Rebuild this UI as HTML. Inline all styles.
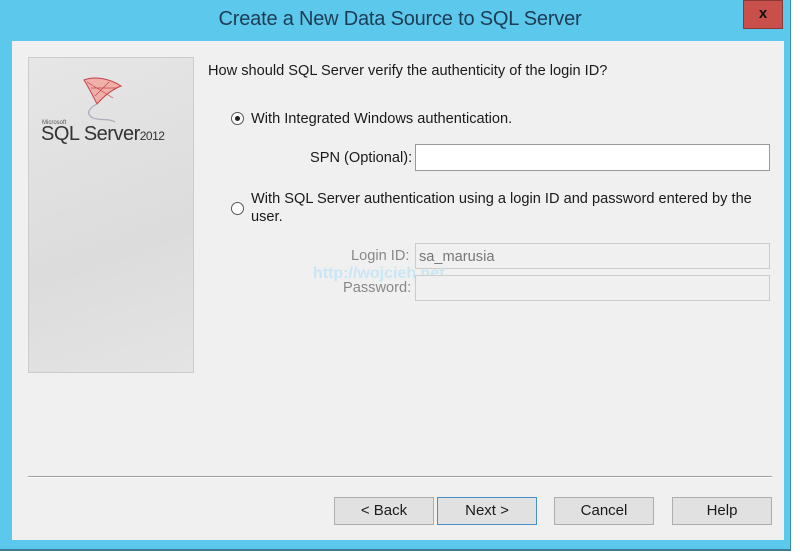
<!DOCTYPE html>
<html><head><style>
body{margin:0;width:800px;height:553px;background:#fff;position:relative;overflow:hidden;font-family:"Liberation Sans",sans-serif;font-size:14.6px;color:#1a1a1a}
.frame{position:absolute;left:0;top:0;width:790px;height:549px;background:#5cc8eb;border-right:1px solid #3a8fb0;border-bottom:2px solid #3a7d95}
.title{position:absolute;left:0;width:800px;top:8px;text-align:center;font-size:20px;color:#1d3c55;letter-spacing:-0.2px}
.close{position:absolute;left:743px;top:0;width:40px;height:29px;background:#c9504a;border:1px solid #8a3a36;box-sizing:border-box;color:#111;font-weight:bold;text-align:center;line-height:26px;font-size:15px}
.client{position:absolute;left:12px;top:41px;width:772px;height:499px;background:#f0f0f0}
.logo{position:absolute;left:28px;top:57px;width:164px;height:314px;border:1px solid #ccc;background:linear-gradient(160deg,#e6e6e6,#dcdcdc 60%,#e4e4e4)}
.t{position:absolute;white-space:nowrap}
.inp{position:absolute;background:#fff;border:1px solid #999;box-sizing:border-box}
.dis{background:#f0f0f0;border-color:#ccc}
.radio{position:absolute;width:13px;height:13px;border:1px solid #555;border-radius:50%;background:#fff;box-sizing:border-box}
.btn{position:absolute;top:497px;width:100px;height:28px;border:1px solid #adadad;background:#e1e1e1;box-sizing:border-box;text-align:center;line-height:26px;font-size:15px}
</style></head><body>
<div class="frame"></div>
<div class="title">Create a New Data Source to SQL Server</div>
<div class="close">x</div>
<div class="client"></div>
<div class="logo">
<svg width="164" height="100" style="position:absolute;left:0;top:0">
<path d="M55 22 C65 18 80 20 92 28 C82 32 75 38 68 46 C64 38 60 30 55 22Z" fill="#eeb0a8" stroke="#c8404a" stroke-width="1"/>
<path d="M58 24 L84 40 M62 30 L88 30 M66 38 L80 24" stroke="#c8404a" stroke-width="0.7"/>
<path d="M68 46 C60 50 56 56 64 60 C72 63 80 60 86 64" stroke="#aab" fill="none" stroke-width="1.2"/>
</svg>
<div class="t" style="left:13px;top:62px;font-size:6px;color:#555">Microsoft</div>
<div class="t" style="left:12px;top:65px;font-size:20px;color:#333;letter-spacing:-0.5px">SQL Server<span style="font-size:12px">2012</span></div>
</div>
<div class="t" style="left:208px;top:63px">How should SQL Server verify the authenticity of the login ID?</div>
<div class="radio" style="left:231px;top:112px"><div style="position:absolute;left:3px;top:3px;width:5px;height:5px;border-radius:50%;background:#222"></div></div>
<div class="t" style="left:251px;top:111px">With Integrated Windows authentication.</div>
<div class="t" style="left:310px;top:150px">SPN (Optional):</div>
<div class="inp" style="left:415px;top:144px;width:355px;height:27px"></div>
<div class="radio" style="left:231px;top:202px"></div>
<div class="t" style="left:251px;top:191px">With SQL Server authentication using a login ID and password entered by the</div>
<div class="t" style="left:251px;top:209px">user.</div>
<div class="t" style="left:351px;top:248px;color:#888">Login ID:</div>
<div class="inp dis" style="left:415px;top:243px;width:355px;height:26px"><span style="position:absolute;left:3px;top:5px;color:#777">sa_marusia</span></div>
<div class="t" style="left:313px;top:265px;color:#c9e6f4;font-size:16px;font-weight:bold">http://wojcieh.net</div>
<div class="t" style="left:343px;top:280px;color:#888">Password:</div>
<div class="inp dis" style="left:415px;top:275px;width:355px;height:26px"></div>
<div style="position:absolute;left:28px;top:476px;width:744px;height:1px;background:#a0a0a0;border-bottom:1px solid #fff"></div>
<div class="btn" style="left:334px">&lt; Back</div>
<div class="btn" style="left:437px;border-color:#4a8ec8">Next &gt;</div>
<div class="btn" style="left:554px">Cancel</div>
<div class="btn" style="left:672px">Help</div>
</body></html>
